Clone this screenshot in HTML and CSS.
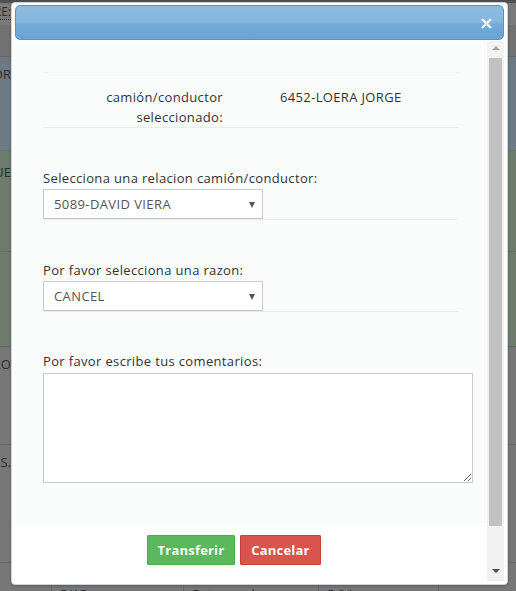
FILE: index.html
```html
<!DOCTYPE html>
<html lang="es">
<head>
<meta charset="utf-8">
<title>Transferir</title>
<link rel="stylesheet" href="styles.css">
</head>
<body>
<div class="page">
  <div class="band band-top"></div>
  <div class="band band-head"><div class="cell-left"><span class="dotted">NOMBRE:</span></div></div>
  <div class="band band-head2"></div>
  <div class="band band-blue"><div class="cell-left">PROVEEDOR</div></div>
  <div class="band band-green1"><div class="cell-left">BLOQUE</div></div>
  <div class="band band-green2"></div>
  <div class="band band-gray1"><div class="cell-left">TERCERO</div></div>
  <div class="band band-gray2"><div class="cell-left">CLIENTES.</div></div>
  <div class="band band-bottom">
    <div class="bcell c1"></div>
    <div class="bcell c2">5/15</div>
    <div class="bcell c3">Entregando</div>
    <div class="bcell c4">5.04</div>
    <div class="bcell c5"></div>
  </div>
</div>

<div class="dialog">
  <div class="titlebar">
    <span class="close">
      <svg width="11" height="11" viewBox="0 0 11 11"><path d="M1.8 1.8 L9.2 9.2 M9.2 1.8 L1.8 9.2" stroke="#e9f1f8" stroke-width="2.6" stroke-linecap="round"/></svg>
    </span>
  </div>
  <div class="body">
    <div class="content">
      <div class="form">
        <div class="row-selected">
          <div class="sel-label">camión/conductor<br>seleccionado:</div>
          <div class="sel-value">6452-LOERA JORGE</div>
        </div>
        <div class="group">
          <label class="lbl">Selecciona una relacion camión/conductor:</label>
          <div class="select-wrap">
            <select class="select"><option>5089-DAVID VIERA</option></select>
            <span class="arrow"></span>
          </div>
        </div>
        <div class="group">
          <label class="lbl">Por favor selecciona una razon:</label>
          <div class="select-wrap">
            <select class="select"><option>CANCEL</option></select>
            <span class="arrow"></span>
          </div>
        </div>
        <div class="group group-last">
          <label class="lbl">Por favor escribe tus comentarios:</label>
          <textarea class="textarea"></textarea>
        </div>
      </div>
      <div class="footer">
        <button class="btn btn-green">Transferir</button>
        <button class="btn btn-red">Cancelar</button>
      </div>
    </div>
    <div class="scrollbar">
      <div class="sb-up"></div>
      <div class="sb-thumb"></div>
      <div class="sb-down"></div>
    </div>
  </div>
</div>
</body>
</html>
```

FILE: styles.css
```css
html, body {
  margin: 0;
  padding: 0;
}
body {
  width: 516px;
  height: 591px;
  overflow: hidden;
  position: relative;
  font-family: "Open Sans", "Liberation Sans", sans-serif;
  font-size: 13px;
  color: #333;
  background: #777;
}

/* dimmed page behind */
.page {
  display: flex;
  flex-direction: column;
  color: #2e2e2e;
  font-size: 13px;
}
.band {
  display: flex;
  align-items: center;
  box-sizing: border-box;
}
.cell-left {
  width: 11px;
  overflow: hidden;
  display: flex;
  justify-content: flex-end;
  white-space: nowrap;
  flex: none;
}
.band-top { height: 3px; background: #505050; }
.band-head { height: 22px; background: #7a7a7a; align-items: flex-start; padding-top: 1px; }
.dotted { border-bottom: 1px dotted #333; line-height: 15px; font-size: 12px; }
.band-head2 { height: 32px; background: #727272; border-bottom: 1px solid #666; }
.band-blue { height: 93px; background: #6b7a85; align-items: flex-start; padding-top: 8px; }
.band-green1 { height: 102px; background: #6d7c6d; border-top: 1px solid #66756a; border-bottom: 1px solid #62705f; align-items: flex-start; padding-top: 12px; }
.band-green2 { height: 95px; background: #6d7c6d; border-bottom: 1px solid #666; }
.band-gray1 { height: 98px; background: #777; border-bottom: 1px solid #6a6a6a; align-items: flex-start; padding-top: 8px; }
.band-gray2 { height: 118px; background: #777; border-bottom: 1px solid #6a6a6a; align-items: flex-start; padding-top: 8px; }
.band-bottom { height: 30px; background: #777; align-items: flex-start; }
.bcell {
  height: 30px;
  box-sizing: border-box;
  border-right: 1px solid #666;
  padding: 22px 0 0 8px;
  font-size: 13px;
  color: #2e2e2e;
  white-space: nowrap;
  overflow: hidden;
}
.c1 { width: 52px; }
.c2 { width: 132px; }
.c3 { width: 135px; }
.c4 { width: 120px; }
.c5 { flex: 1; border-right: 0; }

/* dialog */
.dialog {
  position: absolute;
  left: 11px;
  top: 2px;
  width: 497px;
  height: 583px;
  box-sizing: border-box;
  background: #fff;
  border: 1px solid #c9d6e0;
  border-radius: 4px;
  padding: 2px 3px 3px 3px;
  display: flex;
  flex-direction: column;
  box-shadow: 0 1px 3px rgba(0,0,0,.25);
  letter-spacing: 0.35px;
}
.titlebar {
  height: 35px;
  flex: none;
  box-sizing: border-box;
  border: 1px solid #4f95d0;
  border-radius: 5px;
  background: linear-gradient(to bottom, #8dbadf 0%, #87b6dc 48%, #73aad6 56%, #6ba4d2 100%);
  display: flex;
  align-items: center;
  justify-content: flex-end;
  padding-right: 11px;
}
.close {
  display: flex;
  margin-top: 2px;
}
.body {
  flex: 1;
  display: flex;
  min-height: 0;
  margin-top: 1px;
}
.content {
  flex: 1;
  display: flex;
  flex-direction: column;
  background: #fff;
}
.form {
  background: #fafcfc;
  padding: 31px 28px 0 28px;
  height: 486px;
  box-sizing: border-box;
}
.row-selected {
  width: 416px;
  border-top: 1px solid #f5f7f7;
  border-bottom: 1px solid #e9ecec;
  padding-top: 14px;
  display: grid;
  grid-template-columns: 180px 1fr;
  column-gap: 57px;
  line-height: 20px;
  box-sizing: border-box;
}
.sel-label { text-align: right; }
.group {
  width: 416px;
  margin-top: 41px;
  border-bottom: 1px solid #e9ecec;
  display: flex;
  flex-direction: column;
  align-items: flex-start;
}
.group-last {
  border-bottom: 0;
  margin-top: 40px;
}
.lbl {
  line-height: 18px;
  margin-bottom: 2px;
  white-space: nowrap;
}
.group-last .lbl { margin-bottom: 3px; }
.select-wrap {
  position: relative;
  width: 220px;
  height: 30px;
}
.select {
  appearance: none;
  -webkit-appearance: none;
  width: 220px;
  height: 30px;
  box-sizing: border-box;
  border: 1px solid #ccc;
  border-bottom-color: #c4c4c4;
  border-radius: 0;
  background: #fff;
  color: #555;
  font-family: "Open Sans", "Liberation Sans", sans-serif;
  font-size: 13px;
  letter-spacing: 0.4px;
  padding: 0 0 0 10px;
  margin: 0;
  outline: none;
}
.arrow {
  position: absolute;
  right: 8px;
  top: 13px;
  width: 0;
  height: 0;
  border-left: 3.5px solid transparent;
  border-right: 3.5px solid transparent;
  border-top: 6px solid #555;
}
.textarea {
  width: 430px;
  height: 110px;
  box-sizing: border-box;
  border: 1px solid #ccc;
  border-radius: 0;
  background: #fff;
  margin: 0;
  padding: 4px;
  font-family: "Open Sans", "Liberation Sans", sans-serif;
}
.footer {
  flex: 1;
  background: #fff;
  padding: 8px 0 0 132px;
  display: flex;
  align-items: flex-start;
  gap: 5px;
}
.btn {
  height: 30px;
  box-sizing: border-box;
  border: 1px solid;
  border-radius: 1px;
  color: #fff;
  font-family: "Open Sans", "Liberation Sans", sans-serif;
  font-weight: bold;
  font-size: 13px;
  letter-spacing: 0.2px;
  padding: 0;
  text-shadow: 0 0 1px rgba(0,0,0,.15);
}
.btn-green { width: 88px; background: #5cb85c; border-color: #4cae4c; }
.btn-red { width: 81px; background: #d9534f; border-color: #c9413c; }

/* fake scrollbar */
.scrollbar {
  width: 17px;
  flex: none;
  background: #f1f1f1;
  display: flex;
  flex-direction: column;
  align-items: center;
}
.sb-up {
  margin-top: 5px;
  width: 0;
  height: 0;
  border-left: 4px solid transparent;
  border-right: 4px solid transparent;
  border-bottom: 4px solid #a3a3a3;
}
.sb-thumb {
  margin-top: 8px;
  width: 13px;
  height: 468px;
  background: #c1c1c1;
}
.sb-down {
  margin-top: 43px;
  width: 0;
  height: 0;
  border-left: 4px solid transparent;
  border-right: 4px solid transparent;
  border-top: 4px solid #505050;
}
```
